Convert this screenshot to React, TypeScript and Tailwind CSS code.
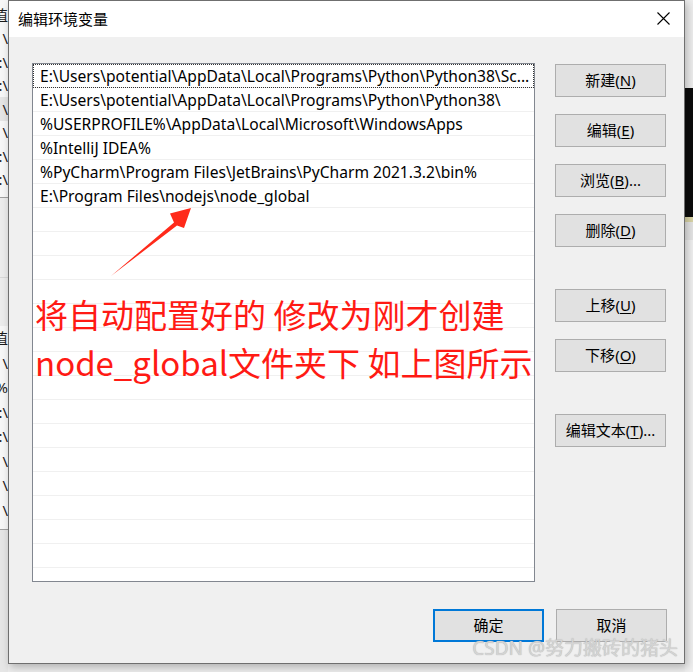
import React from "react";

const font = { fontFamily: '"Noto Sans", "Noto Sans CJK SC", sans-serif' };

const rows = [
  "E:\\Users\\potential\\AppData\\Local\\Programs\\Python\\Python38\\Sc...",
  "E:\\Users\\potential\\AppData\\Local\\Programs\\Python\\Python38\\",
  "%USERPROFILE%\\AppData\\Local\\Microsoft\\WindowsApps",
  "%IntelliJ IDEA%",
  "%PyCharm\\Program Files\\JetBrains\\PyCharm 2021.3.2\\bin%",
  "E:\\Program Files\\nodejs\\node_global",
];

function Btn({ label, u, rest, className = "" }: { label: string; u?: string; rest?: string; className?: string }) {
  return (
    <div
      className={
        "flex h-[33px] w-[111px] items-center justify-center border border-[#adadad] bg-[#e1e1e1] text-[15px] text-black " +
        className
      }
    >
      <span>
        {label}
        {u !== undefined && (
          <>
            (<span className="underline underline-offset-2">{u}</span>){rest}
          </>
        )}
      </span>
    </div>
  );
}

export default function App() {
  const total = 22;
  const leftTop = ["值", "\\", ":\\", ":\\", "\\", "\\", ":\\", ":\\"];
  const leftBottom = ["值", "\\", "%", ":\\", ":\\", "\\", "\\", "\\"];
  return (
    <div className="flex h-[672px] w-[693px] overflow-hidden bg-[#ececec]" style={font}>
      {/* left background strip */}
      <div className="flex w-[8px] shrink-0 flex-col overflow-hidden">
        <div className="flex h-[198px] flex-col border-b border-[#a0a0a0] bg-[#f7f7f7] pt-[3px]">
          {leftTop.map((t, i) => (
            <div
              key={i}
              className={"flex h-[23.5px] items-center justify-end whitespace-nowrap text-[15px] text-[#1a1a1a] " + (i === 4 ? "bg-[#e5e5e5]" : "")}
            >
              {t}
            </div>
          ))}
        </div>
        <div className="h-[80px] border-b border-[#d8d8d8] bg-[#ececec]" />
        <div className="h-[48px] bg-[#ececec]" />
        <div className="flex h-[204px] flex-col border-b border-[#a0a0a0] bg-[#f7f7f7]">
          {leftBottom.map((t, i) => (
            <div key={i} className="flex h-[24.5px] items-center justify-end whitespace-nowrap text-[15px] text-[#1a1a1a]">
              {t}
            </div>
          ))}
        </div>
        <div className="flex-1 bg-[#e6e6e6]" />
      </div>

      {/* dialog */}
      <div className="relative flex h-[664px] w-[677px] shrink-0 flex-col border border-[#6f6f6f] bg-[#f0f0f0] shadow-[2px_3px_8px_rgba(0,0,0,0.25)]">
        {/* title bar */}
        <div className="flex h-[36px] items-center justify-between bg-white pl-[9px] pr-[14px]">
          <span className="text-[15px] text-black">编辑环境变量</span>
          <svg width="13" height="13" viewBox="0 0 13 13" className="mb-[1px]">
            <path d="M0.5 0.5 L12.5 12.5 M12.5 0.5 L0.5 12.5" stroke="#000" strokeWidth="1.1" />
          </svg>
        </div>

        {/* content */}
        <div className="flex flex-1 flex-col pl-[23px] pr-[17px] pt-[26px]">
          <div className="flex gap-[20px]">
            {/* list */}
            <div className="relative h-[519px] w-[503px] overflow-hidden border border-[#828790] bg-white">
              {Array.from({ length: total }).map((_, i) => (
                <div
                  key={i}
                  className={
                    "flex h-[24px] items-center border-b border-[#f0f0f0] pl-[7px] pt-[2px] text-[15.6px] whitespace-nowrap text-black " +
                    (i === 0 ? "outline outline-1 outline-dotted outline-offset-[-1px] outline-[#333]" : "")
                  }
                >
                  {rows[i] ?? ""}
                </div>
              ))}

              {/* red arrow annotation */}
              <svg className="pointer-events-none absolute left-0 top-0" width="503" height="519">
                <polygon
                  points="78,212 141,158.5 137,149.5 158,144 151,164 144,161.5"
                  fill="#ff2a1a"
                />
              </svg>

              {/* red text annotation */}
              <div
                className="pointer-events-none absolute left-[2px] top-[226px] text-[33px] leading-[48px] whitespace-nowrap text-[#ff1a14]"
                style={{ fontFamily: '"Noto Sans CJK SC", "Noto Sans", sans-serif' }}
              >
                <div>将自动配置好的 修改为刚才创建</div>
                <div>node_global文件夹下 如上图所示</div>
              </div>
            </div>

            {/* side buttons */}
            <div className="flex flex-col pt-[1px]">
              <Btn label="新建" u="N" />
              <Btn label="编辑" u="E" className="mt-[17px]" />
              <Btn label="浏览" u="B" rest="..." className="mt-[17px]" />
              <Btn label="删除" u="D" className="mt-[17px]" />
              <Btn label="上移" u="U" className="mt-[42px]" />
              <Btn label="下移" u="O" className="mt-[17px]" />
              <Btn label="编辑文本" u="T" rest="..." className="mt-[42px]" />
            </div>
          </div>

          {/* bottom buttons */}
          <div className="mt-[27px] flex justify-end gap-[12px]">
            <div className="flex h-[33px] w-[111px] items-center justify-center border-2 border-[#0078d7] bg-[#e1e1e1] text-[15px] text-black">
              确定
            </div>
            <Btn label="取消" />
          </div>
        </div>

        {/* watermark */}
        <div
          className="pointer-events-none absolute bottom-[1px] right-[6px] text-[19px] whitespace-nowrap text-[#d4d4d4]"
          style={{ textShadow: "0 0 1px #a8a8a8" }}
        >
          CSDN @努力搬砖的猪头
        </div>
      </div>

      {/* right background strip */}
      <div className="flex w-[8px] shrink-0 flex-col overflow-hidden">
        <div className="h-[88px] bg-[#ededed]" />
        <div className="h-[129px] bg-[#0c0c0c]" />
        <div className="h-[5px] bg-[#d9d4a6]" />
        <div className="h-[18px] bg-[#e4e4e4]" />
        <div className="flex-1 bg-[#efefef]" />
      </div>
    </div>
  );
}
